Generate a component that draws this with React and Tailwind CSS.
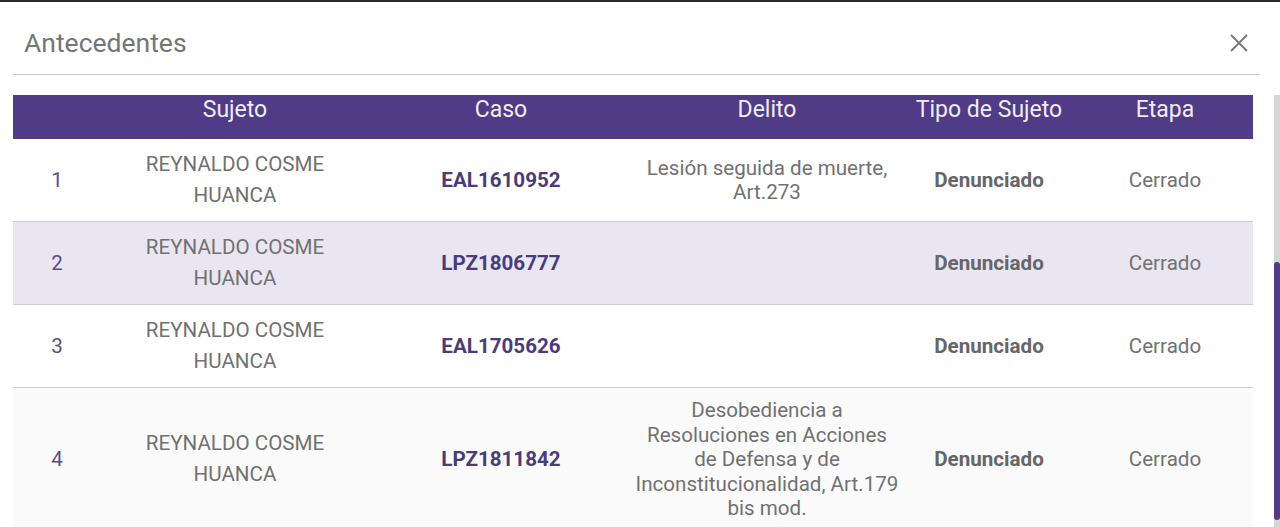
import React from 'react';

const rows = [
    { n: 1, caso: 'EAL1610952', delito: 'Lesión seguida de muerte, Art.273', bg: 'bg-white' },
    { n: 2, caso: 'LPZ1806777', delito: '', bg: 'bg-[#e9e6f1]' },
    { n: 3, caso: 'EAL1705626', delito: '', bg: 'bg-white' },
    {
        n: 4,
        caso: 'LPZ1811842',
        delito: 'Desobediencia a Resoluciones en Acciones de Defensa y de Inconstitucionalidad, Art.179 bis mod.',
        bg: 'bg-[#fafafa]',
    },
];

const cols = 'grid grid-cols-[88px_268px_264px_268px_176px_176px]';

export default function App() {
    return (
        <div
            className="w-full h-[527px] overflow-hidden bg-white border-t-2 border-[#2b2b2b]"
            style={{ fontFamily: 'Roboto, "Noto Sans", sans-serif' }}
        >
            {/* Modal header */}
            <div className="h-[72px] flex justify-between pl-[24px] pr-[32px]">
                <h2 className="pt-[25px] text-[26.5px] leading-[31px] text-[#757575]">Antecedentes</h2>
                <button type="button" className="mt-[32px] w-[18px] h-[18px] text-[#777]">
                    <svg viewBox="0 0 18 18" width="18" height="18" fill="none" stroke="currentColor" strokeWidth="1.8">
                        <path d="M1 1L17 17M17 1L1 17" />
                    </svg>
                </button>
            </div>
            <div className="ml-[13px] mr-[20px] h-px bg-[#cfcfcf]" />

            <div className="mt-[20px] flex">
                {/* Table */}
                <div className="ml-[13px] w-[1240px]">
                    <div className={`${cols} h-[44px] pt-[1px] bg-[#4f3b86] text-[#efecf7] text-[23px] leading-[28px] text-center`}>
                        <div />
                        <div>Sujeto</div>
                        <div>Caso</div>
                        <div>Delito</div>
                        <div>Tipo de Sujeto</div>
                        <div>Etapa</div>
                    </div>

                    {rows.map((row) => (
                        <div
                            key={row.n}
                            className={`${cols} ${row.bg} items-center text-center text-[20.6px] text-[#717171] border-b border-[#cbc9d2] py-[10px]`}
                        >
                            <div className="text-[#5b4b8c]">{row.n}</div>
                            <div className="leading-[31px] px-4">
                                REYNALDO COSME
                                <br />
                                HUANCA
                            </div>
                            <div className="font-bold text-[#4a3b7a]">{row.caso}</div>
                            <div className="leading-[24.5px] px-[2px]">{row.delito}</div>
                            <div className="font-bold text-[#666]">Denunciado</div>
                            <div>Cerrado</div>
                        </div>
                    ))}
                </div>

                {/* Scrollbar */}
                <div className="ml-[21px] w-[6px] h-[440px] bg-[#d6d6d6] pt-[167px]">
                    <div className="h-[258px] w-full bg-[#4f3b86] rounded-[3px]" />
                </div>
            </div>
        </div>
    );
}
